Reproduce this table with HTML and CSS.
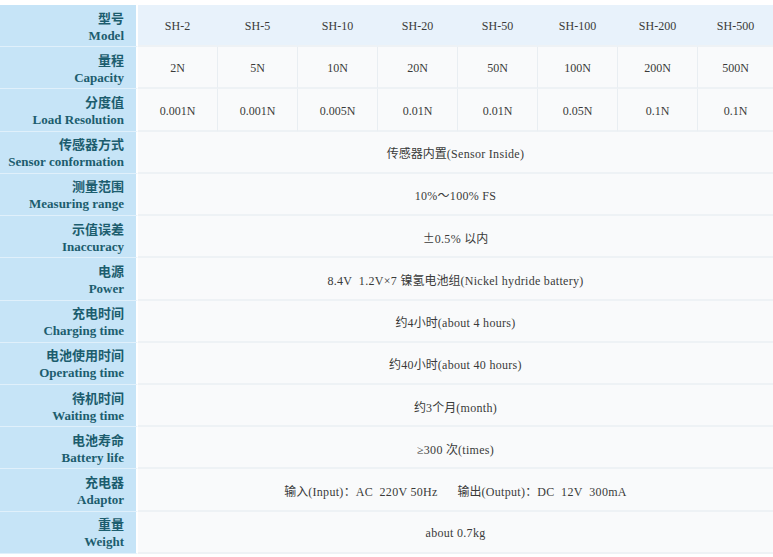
FILE: index.html
```html
<!DOCTYPE html>
<html>
<head>
<meta charset="utf-8">
<link rel="stylesheet" href="styles.css">
</head>
<body>
<div class="wrap">
<table class="spec">
  <colgroup>
    <col class="c-label"><col class="c-d"><col class="c-d"><col class="c-d"><col class="c-d"><col class="c-d"><col class="c-d"><col class="c-d"><col class="c-last">
  </colgroup>
  <tr class="head">
    <th><span class="zh">型号</span><span class="en">Model</span></th>
    <td>SH-2</td><td>SH-5</td><td>SH-10</td><td>SH-20</td><td>SH-50</td><td>SH-100</td><td>SH-200</td><td>SH-500</td>
  </tr>
  <tr>
    <th><span class="zh">量程</span><span class="en">Capacity</span></th>
    <td>2N</td><td>5N</td><td>10N</td><td>20N</td><td>50N</td><td>100N</td><td>200N</td><td>500N</td>
  </tr>
  <tr>
    <th><span class="zh">分度值</span><span class="en">Load Resolution</span></th>
    <td>0.001N</td><td>0.001N</td><td>0.005N</td><td>0.01N</td><td>0.01N</td><td>0.05N</td><td>0.1N</td><td>0.1N</td>
  </tr>
  <tr>
    <th><span class="zh">传感器方式</span><span class="en">Sensor conformation</span></th>
    <td class="wide" colspan="8"><span class="cn">传感器内置</span>(Sensor Inside)</td>
  </tr>
  <tr>
    <th><span class="zh">测量范围</span><span class="en">Measuring range</span></th>
    <td class="wide" colspan="8">10%～100% FS</td>
  </tr>
  <tr>
    <th><span class="zh">示值误差</span><span class="en">Inaccuracy</span></th>
    <td class="wide" colspan="8"><span class="cn">±</span>0.5% <span class="cn">以内</span></td>
  </tr>
  <tr>
    <th><span class="zh">电源</span><span class="en">Power</span></th>
    <td class="wide" colspan="8">8.4V&nbsp; 1.2V×7 <span class="cn">镍氢电池组</span>(Nickel hydride battery)</td>
  </tr>
  <tr>
    <th><span class="zh">充电时间</span><span class="en">Charging time</span></th>
    <td class="wide" colspan="8"><span class="cn">约</span>4<span class="cn">小时</span>(about 4 hours)</td>
  </tr>
  <tr>
    <th><span class="zh">电池使用时间</span><span class="en">Operating time</span></th>
    <td class="wide" colspan="8"><span class="cn">约</span>40<span class="cn">小时</span>(about 40 hours)</td>
  </tr>
  <tr>
    <th><span class="zh">待机时间</span><span class="en">Waiting time</span></th>
    <td class="wide" colspan="8"><span class="cn">约</span>3<span class="cn">个月</span>(month)</td>
  </tr>
  <tr>
    <th><span class="zh">电池寿命</span><span class="en">Battery life</span></th>
    <td class="wide" colspan="8">≥300 <span class="cn">次</span>(times)</td>
  </tr>
  <tr>
    <th><span class="zh">充电器</span><span class="en">Adaptor</span></th>
    <td class="wide" colspan="8"><span class="cn">输入</span>(Input)<span class="cn">：</span>AC&nbsp; 220V 50Hz&nbsp;&nbsp;&nbsp;&nbsp;&nbsp; <span class="cn">输出</span>(Output)<span class="cn">：</span>DC&nbsp; 12V&nbsp; 300mA</td>
  </tr>
  <tr>
    <th><span class="zh">重量</span><span class="en">Weight</span></th>
    <td class="wide" colspan="8">about 0.7kg</td>
  </tr>
</table>
</div>
</body>
</html>
```

FILE: styles.css
```css
html, body {
  margin: 0;
  padding: 0;
  background: #ffffff;
}

.wrap {
  padding-top: 5px;
  width: 773px;
  overflow: hidden;
}

.spec {
  width: 773px;
  height: 549px;
  table-layout: fixed;
  border-collapse: separate;
  border-spacing: 0;
  font-family: "Liberation Serif", "Noto Sans CJK SC", serif;
  font-size: 12px;
  color: #3a3a3a;
}

.c-label { width: 138px; }
.c-d { width: 80px; }
.c-last { width: 75px; }

.spec th {
  background: #c6e4f7;
  text-align: right;
  padding: 2px 12px 0 0;
  border-right: 2px solid #ffffff;
  border-bottom: 1px solid #e0f0fb;
  color: #1c5d6e;
  font-weight: bold;
  vertical-align: middle;
}

.spec th .zh {
  display: block;
  font-family: "Noto Sans CJK SC", sans-serif;
  font-size: 13px;
  line-height: 18px;
  font-weight: bold;
}

.spec th .en {
  display: block;
  font-family: "Liberation Serif", serif;
  font-size: 13px;
  line-height: 18px;
  font-weight: bold;
}

.spec td {
  background: #f9fafb;
  text-align: center;
  vertical-align: middle;
  padding: 3px 0 0 0;
  border-right: 1px solid #e9eef2;
  border-bottom: 2px solid #eef2f5;
  white-space: nowrap;
}

.spec td.wide {
  letter-spacing: 0.3px;
}

.spec td:last-child {
  border-right: none;
}

.spec .head td {
  background: #e8f2fb;
  border-right-color: #e8f2fb;
}

.cn {
  font-family: "Noto Sans CJK SC", sans-serif;
  font-size: 12px;
  letter-spacing: 0;
}
```
